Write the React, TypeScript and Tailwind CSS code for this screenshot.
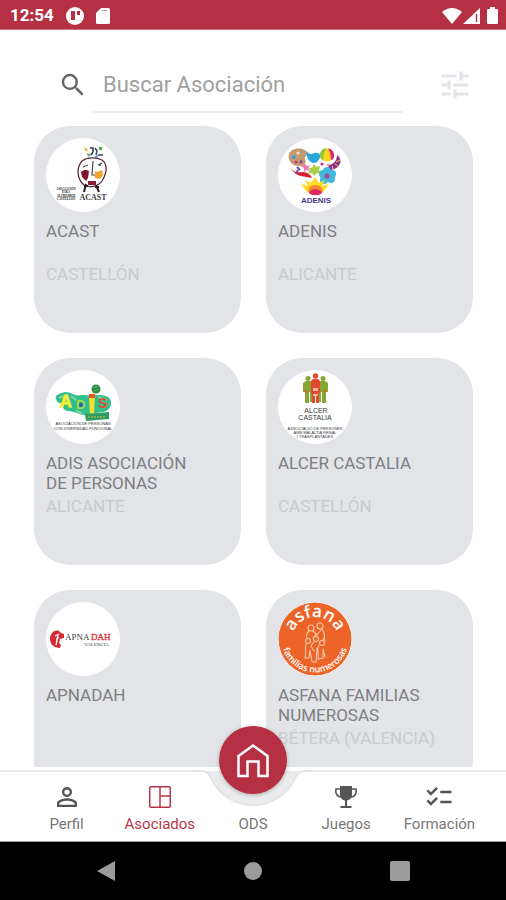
import { useState } from 'react'
import type { ReactNode } from 'react'
import { MdChecklist, MdPersonOutline, MdSearch, MdTune } from 'react-icons/md'

interface Association {
  name: string
  city: string
  logo: ReactNode
}

function AcastLogo() {
  return (
    <svg viewBox="0 0 74 74" className="w-full h-full" aria-hidden="true">
      <g strokeWidth="2" fill="none">
        <path d="M39 10l2 3M41 16l3 1" stroke="#e5a63a" />
        <path d="M44 10h3v4M45 17l2-3" stroke="#303038" strokeWidth="1.5" />
        <path d="M49 10l2 3-1 4M52 17h5" stroke="#454064" strokeWidth="1.5" />
        <path d="M53 10l3 1" stroke="#4ca64c" strokeWidth="3" />
        <path d="M42 18l3-2M49 19l3-1" stroke="#4fa6c5" />
      </g>
      <path d="M36 23c-6 7-5 18 2 24 5 3 14 2 18-4 5-8 6-17 0-21-6-3-15-3-20 1z" fill="#fff" stroke="#5a2a3c" strokeWidth="1.3" />
      <path d="M35 34c3-3 6-2 8-1l-1 7-2 3-4-4z" fill="#7b1830" />
      <path d="M49 33l2 1 5-2 1 5-3 4-5-1z" fill="#f3a32b" />
      <path d="M47 23l-1 14h3M37 29l5-2M52 27l4-2" stroke="#4a4a52" strokeWidth="1.2" fill="none" />
      <path d="M53 27h2" stroke="#2f7f6a" strokeWidth="2" />
      <path d="M42 43h8v4h-8z" fill="#8b1938" />
      <path d="M40 46l-2 8M50 47l3 7M38 48h4M49 49h4" stroke="#241e23" strokeWidth="2" />
      <text x="47" y="62" textAnchor="middle" fontSize="8" className="font-['Liberation_Serif',serif] font-bold" fill="#3f3f46">ACAST</text>
      <g fontSize="3" textAnchor="middle" className="font-['Liberation_Serif',serif] font-bold" fill="#222">
        <text x="20" y="52">ASOCIACIÓN</text>
        <text x="20" y="55">PARA</text>
        <text x="20" y="59">ALZHEIMER</text>
        <text x="20" y="62">CASTELLÓN</text>
      </g>
    </svg>
  )
}

function AdenisLogo() {
  return (
    <svg viewBox="0 0 74 74" className="w-full h-full" aria-hidden="true">
      <path d="M11 16c3-7 15-7 18-2 1 4-3 4-2 7s1 7-4 7c-8 1-14-5-12-12z" fill="#c59a72" />
      <circle cx="16" cy="19" r="1.8" fill="#29a2d4" />
      <circle cx="20" cy="15" r="1.6" fill="#f2e2c6" />
      <circle cx="18" cy="24" r="1.6" fill="#d92d71" />
      <circle cx="23" cy="24" r="1.4" fill="#7440a0" />
      <path d="M29 13c1 3 4 4 7 2 3-1 7 0 6 4s-5 8-9 5c-3-2-5-6-4-11z" fill="#28a9d9" />
      <circle cx="49" cy="17" r="6.500" fill="#fbd51c" />
      <path d="M49 10.500a6.500 6.500 0 00-4 12c0-5 1-9 4-12z" fill="#8dc63f" />
      <path d="M50 10.500a6.500 6.500 0 013 12c0-5-1-9-3-12z" fill="#e52372" />
      <path d="M59 17c7 5 3 15-8 15l-1-5c5 0 9-4 9-10z" fill="#8b318f" />
      <path d="M62 22l-4 2M60 28l-3-2M55 31l-1-3" stroke="#f8c633" />
      <path d="M12 29c3 5 8 6 13 5 4 0 8 3 9 6-7-2-16 0-22-11z" fill="#db2036" />
      <path d="M19 29l3 3M18 36l2-4" stroke="#6b4ca2" strokeWidth="2" />
      <path d="M27 26l2 2 3-1-2 3 2 3-4-1-2 2v-4l-3-2z" fill="#ec79b2" />
      <path d="M36 26l2 3 4-1-1 4 2 4-4-1-3 3-2-3-4 1 2-4-2-3 4 1z" fill="#a8cf45" />
      <g fill="#43b8dd">
        <circle cx="49" cy="33" r="4" />
        <circle cx="54" cy="36" r="4" />
        <circle cx="53" cy="41" r="4" />
        <circle cx="46" cy="42" r="4" />
        <circle cx="45" cy="36" r="4" />
      </g>
      <circle cx="49" cy="38" r="2.500" fill="#a54895" />
      <circle cx="44" cy="26" r="1.600" fill="#c63196" />
      <circle cx="50" cy="27" r="1.400" fill="#ef9ec2" />
      <path d="M23 46l7 2-3-6 6 3 4-6 4 6 6-3-3 6 7-2-5 7-4 3H32l-4-3z" fill="#fddc25" />
      <path d="M30 53c1-8 14-8 15 0l-3 3h-9z" fill="#f4892d" />
      <path d="M31 55c1-5 12-5 13 0l-3 2h-7z" fill="#df2862" />
      <text x="38" y="65" textAnchor="middle" fontSize="8" className="font-['Liberation_Sans',sans-serif] font-bold" fill="#4b398e">ADENIS</text>
    </svg>
  )
}

function AdisLogo() {
  return (
    <svg viewBox="0 0 74 74" className="w-full h-full" aria-hidden="true">
      <path d="M10 29c-2-4 5-6 9-7 7 0 10 5 16 3 5 0 6 0 10 1 7-2 17-1 19 3 3 6-1 12-7 13-7 0-11 3-18 3-6 0-10-4-17-4-7-1-4-6-7-8-4 0-4-2-5-4z" fill="#31bf8c" />
      <path d="M13 28l8-3M25 26l5 4M52 27l9 3M30 41l6 2" stroke="#83d59d" strokeWidth="2" />
      <circle cx="50" cy="19" r="4.500" fill="#2f8c48" />
      <path d="M47 18l5-2M48 21l5-2" stroke="#64b35e" />
      <path d="M43 25l6-2-1 22-4 1z" fill="#f7df2d" />
      <path d="M43 24h6v4h-6z" fill="#e85128" />
      <path d="M39 44l24-2v7l-23 2z" fill="#2f9c62" />
      <path d="M42 47h18" stroke="#d1bd45" strokeDasharray="2 1" />
      <g className="font-['Liberation_Sans',sans-serif] font-bold">
        <text x="14" y="37" fontSize="16" fill="#f4ee37" stroke="#f4ee37">A</text>
        <text x="30" y="39" fontSize="13" fill="#a4db46">D</text>
        <text x="52" y="38" fontSize="14" fill="#e54c2c">S</text>
      </g>
      <circle cx="35" cy="35" r="2" fill="#2756b4" />
      <g fontSize="4" textAnchor="middle" className="font-['Liberation_Sans',sans-serif]" fill="#333">
        <text x="37" y="55">ASOCIACIÓN DE PERSONAS</text>
        <text x="37" y="60">CON DIVERSIDAD FUNCIONAL</text>
      </g>
    </svg>
  )
}

function AlcerLogo() {
  return (
    <svg viewBox="0 0 74 74" className="w-full h-full" aria-hidden="true">
      <g fill="#86a832">
        <circle cx="30" cy="8.500" r="2.500" />
        <circle cx="45" cy="8.500" r="2.500" />
        <path d="M25 13l3-2h5l2 3v18h-3V22h-1v11h-4V22h-2z" />
        <path d="M50 13l-3-2h-5l-2 3v18h3V22h1v11h4V22h2z" />
      </g>
      <circle cx="37.500" cy="6" r="2.700" fill="#e44830" />
      <path d="M33 11l2-2h5l2 2v12h-1v10h-3v-8h-1v8h-3V23h-1z" fill="#e44830" />
      <path d="M35 18h5v3h-5zM35 24h5v2h-5z" fill="#f4b9a4" />
      <path d="M29 20h-2v3h2zM48 20h-2v3h2z" fill="#df6330" />
      <g textAnchor="middle" className="font-['Liberation_Sans',sans-serif]" fill="#3a3a3a">
        <text x="38" y="43" fontSize="7">ALCER</text>
        <text x="37" y="50" fontSize="7">CASTALIA</text>
        <text x="37" y="60" fontSize="4">ASSOCIACIÓ DE PERSONES</text>
        <text x="37" y="64" fontSize="4">AMB MALALTIA RENAL</text>
        <text x="37" y="68" fontSize="4">I TRASPLANTADES</text>
      </g>
    </svg>
  )
}

function ApnadahLogo() {
  return (
    <svg viewBox="0 0 74 74" className="w-full h-full" aria-hidden="true">
      <path d="M13 29c-5-2-9 3-9 8s4 9 10 9l1-3-2-2 1-4 4-1v-4l-3-1z" fill="#d42a35" />
      <path d="M9 34l4-2M12 33l-2 10M10 37l3-1" stroke="#fff" strokeWidth="1.300" />
      <g className="font-['Liberation_Serif',serif]">
        <text x="19" y="38" fontSize="9" fill="#3b3b3b">APNA</text>
        <text x="45" y="38" fontSize="9" fill="#d83b43" stroke="#d83b43" strokeWidth=".4">DAH</text>
        <text x="38" y="44" fontSize="5" fill="#3b3b3b">VALENCIA</text>
      </g>
    </svg>
  )
}

function AsfanaLogo() {
  return (
    <svg viewBox="0 0 74 74" className="w-full h-full" aria-hidden="true">
      <circle cx="37" cy="37" r="36.500" fill="#ed6428" />
      <path id="asfana-top" d="M14 38a23 23 0 0146 0" fill="none" />
      <path id="asfana-bottom" d="M3.500 37a33.500 33.500 0 0067 0" fill="none" />
      <g textAnchor="middle" className="font-['Open_Sans',sans-serif]" fill="#fff">
        <text fontSize="17" className="font-semibold">
          <textPath href="#asfana-top" startOffset="50%">asfana</textPath>
        </text>
        <text fontSize="9" className="font-semibold">
          <textPath href="#asfana-bottom" startOffset="50%">familias numerosas</textPath>
        </text>
      </g>
      <g fill="none" stroke="#fbc6a6" strokeWidth="1.100" strokeLinecap="round">
        <circle cx="33" cy="26" r="3" />
        <circle cx="42" cy="24" r="3" />
        <circle cx="30" cy="39" r="2.500" />
        <circle cx="38" cy="37" r="2.500" />
        <circle cx="44" cy="41" r="2.500" />
        <path d="M31 29c-3 3-3 5-2 7M35 29l4 4 4-5M44 27c3 4 3 8 1 11M28 42c-2 5 1 9-1 14h4l1-8 2 12h4l1-14M36 40l-3 4 3 5M41 43c-3 4 0 7-1 14l5-1v-9l2 8M38 33l-3 3M46 33l1 6" />
      </g>
    </svg>
  )
}

function BoardIcon() {
  return (
    <svg viewBox="0 0 24 24" className="w-6 h-6" fill="none" stroke="currentColor" strokeWidth="1.500" aria-hidden="true">
      <rect x="1.750" y="1.750" width="20.500" height="20.500" rx="1" />
      <path d="M12 2v20M12 11h10" />
    </svg>
  )
}

function TrophyIcon() {
  return (
    <svg viewBox="0 0 24 24" className="w-6 h-6" fill="currentColor" aria-hidden="true">
      <path d="M6 1h12v8c0 4-2 6-5 6.500V21h4.500v2h-11v-2H11v-5.500C8 15 6 13 6 9z" />
      <path d="M6 4H2C1 8 3 12 7 12M18 4h4c1 4-1 8-5 8" fill="none" stroke="currentColor" strokeWidth="1.600" />
    </svg>
  )
}

const associations: Association[] = [
  { name: 'ACAST', city: 'CASTELLÓN', logo: <AcastLogo /> },
  { name: 'ADENIS', city: 'ALICANTE', logo: <AdenisLogo /> },
  { name: 'ADIS ASOCIACIÓN DE PERSONAS', city: 'ALICANTE', logo: <AdisLogo /> },
  { name: 'ALCER CASTALIA', city: 'CASTELLÓN', logo: <AlcerLogo /> },
  { name: 'APNADAH', city: '', logo: <ApnadahLogo /> },
  { name: 'ASFANA FAMILIAS NUMEROSAS', city: 'BÉTERA (VALENCIA)', logo: <AsfanaLogo /> },
]

const tabs: { label: string; icon: ReactNode }[] = [
  { label: 'Perfil', icon: <MdPersonOutline size={30} /> },
  { label: 'Asociados', icon: <BoardIcon /> },
  { label: 'ODS', icon: null },
  { label: 'Juegos', icon: <TrophyIcon /> },
  { label: 'Formación', icon: <MdChecklist size={30} /> },
]

function StatusBar() {
  return (
    <header className="h-[30px] shrink-0 bg-[#b63044] border-b border-[#cf7481] px-2.5 pt-0.5 flex items-center text-white">
      <span className="text-[17px] font-bold">12:54</span>
      <svg viewBox="0 0 18 18" className="w-[18px] h-[18px] ml-3" aria-hidden="true">
        <circle cx="9" cy="9" r="9" fill="#fff" />
        <path d="M5 4h4v9H5zM11 4h3v4h-3z" fill="#b63044" />
      </svg>
      <svg viewBox="0 0 14 16" className="w-3.5 h-4 ml-3" aria-hidden="true">
        <path d="M5 0h7.500Q14 0 14 1.500v13q0 1.500-1.500 1.500h-11Q0 16 0 14.500V5z" fill="#fff" />
        <path d="M6 2.500h5" stroke="#b63044" opacity=".5" />
      </svg>
      <div className="ml-auto flex items-center gap-px">
        <svg viewBox="0 0 20 16" className="w-5 h-4" aria-hidden="true">
          <path d="M0 4Q10-4 20 4L10 16z" fill="#fff" />
        </svg>
        <svg viewBox="0 0 17 16" className="w-[17px] h-4" aria-hidden="true">
          <path d="M17 0v16H0z" fill="#fff" />
          <path d="M13.500 6v8" stroke="#b63044" strokeWidth="1.500" />
        </svg>
        <svg viewBox="0 0 11 17" className="w-[11px] h-[17px] ml-1.5 -mr-0.5" aria-hidden="true">
          <path d="M3 0h5v2h2q1 0 1 1v13q0 1-1 1H1q-1 0-1-1V3q0-1 1-1h2z" fill="#fff" />
        </svg>
      </div>
    </header>
  )
}

function AssociationCard({ name, city, logo }: Association) {
  return (
    <article className="h-[207px] rounded-[36px] bg-[#e2e4e7] p-3">
      <div className="w-[74px] h-[74px] rounded-full bg-white overflow-hidden">{logo}</div>
      <h2 className="mt-[9px] h-10 pr-8 text-[17px] leading-5 text-[#7d7f82]">{name}</h2>
      <p className="mt-[3px] text-[17px] leading-5 text-[#c9cbce] whitespace-nowrap">{city}</p>
    </article>
  )
}

function TabBar({ active, onSelect }: { active: string; onSelect: (label: string) => void }) {
  return (
    <nav className="relative h-[75px] shrink-0">
      <div className="absolute inset-0 flex">
        <div className="flex-1 bg-white mt-[3px] border-t-2 border-[#e9e9e9]" />
        <svg viewBox="0 0 120 75" className="w-[120px] h-[75px]" aria-hidden="true">
          <path d="M0 0h120v75H0z" fill="#fff" />
          <path d="M12 4C16 5 17 9 19 13A46 46 0 00101 13C103 9 104 5 108 4z" fill="#ebeced" />
          <path d="M0 4h9C15 4 17 9 19 13A46 46 0 00101 13C103 9 105 4 111 4h9" fill="none" stroke="#e4e4e4" strokeWidth="2" />
        </svg>
        <div className="flex-1 bg-white mt-[3px] border-t-2 border-[#e9e9e9]" />
      </div>
      <div className="relative h-full px-5 pt-[15px] flex border-b border-[#9c9c9c]">
        {tabs.map(tab => (
          <button
            key={tab.label}
            type="button"
            onClick={() => onSelect(tab.label)}
            className={`flex-1 basis-0 min-w-0 flex flex-col items-center ${
              tab.label === active ? 'text-[#b9364a]' : 'text-[#555555]'
            }`}
          >
            <span className="h-[30px] flex items-center">{tab.icon}</span>
            <span className={`mt-0.5 text-[15px] leading-5 ${tab.label === active ? '' : 'text-[#777777]'}`}>{tab.label}</span>
          </button>
        ))}
      </div>
      <button
        type="button"
        aria-label="Inicio"
        className="absolute left-1/2 -top-[41px] -translate-x-1/2 w-[68px] h-[68px] rounded-full bg-[#b63044] text-white flex items-center justify-center shadow-[0_1px_4px_rgba(0,0,0,0.25)]"
      >
        <svg viewBox="0 0 34 36" className="w-[34px] h-9" fill="none" stroke="currentColor" strokeWidth="2.500" aria-hidden="true">
          <path d="M2.500 14L17 3.500 31.500 14v20h-9V19.500h-11V34h-9z" />
        </svg>
      </button>
    </nav>
  )
}

function SystemBar() {
  return (
    <footer className="h-[58px] shrink-0 bg-black px-[33px] flex text-[#9b9b9b]">
      <button type="button" aria-label="Atrás" className="flex-1 flex items-center justify-center">
        <svg viewBox="0 0 18 20" className="w-[18px] h-5" fill="currentColor" aria-hidden="true">
          <path d="M18 0v20L0 10z" />
        </svg>
      </button>
      <button type="button" aria-label="Pantalla de inicio" className="flex-1 flex items-center justify-center">
        <span className="w-[18px] h-[18px] rounded-full bg-current" />
      </button>
      <button type="button" aria-label="Recientes" className="flex-1 flex items-center justify-center">
        <span className="w-5 h-5 rounded-xs bg-current" />
      </button>
    </footer>
  )
}

export default function App() {
  const [query, setQuery] = useState('')
  const [active, setActive] = useState('Asociados')

  const visible = associations.filter(a => a.name.toLowerCase().includes(query.toLowerCase()))

  return (
    <div className="h-screen flex flex-col bg-white overflow-hidden font-[Roboto,sans-serif]">
      <StatusBar />
      <main className="flex-1 min-h-0 overflow-hidden">
        <div className="pt-[26px] pb-[13px] pl-[58px] pr-[33px] flex items-center">
          <label htmlFor="search" aria-label="Buscar Asociación" className="text-[#666666]">
            <MdSearch size={30} />
          </label>
          <input
            id="search"
            type="text"
            value={query}
            onChange={e => setQuery(e.target.value)}
            placeholder="Buscar Asociación"
            className="ml-[5px] mr-[35px] flex-1 min-w-0 h-[57px] pl-2.5 pt-0.5 border-b-2 border-[#e9eaeb] text-[22px] text-[#666666] placeholder:text-[#a0a0a0] outline-none"
          />
          <button type="button" aria-label="Filtros" className="text-[#e2e4e7]">
            <MdTune size={36} />
          </button>
        </div>
        <div className="pl-[34px] pr-[33px] grid grid-cols-2 gap-[25px]">
          {visible.map(a => <AssociationCard key={a.name} {...a} />)}
        </div>
      </main>
      <TabBar active={active} onSelect={setActive} />
      <SystemBar />
    </div>
  )
}
